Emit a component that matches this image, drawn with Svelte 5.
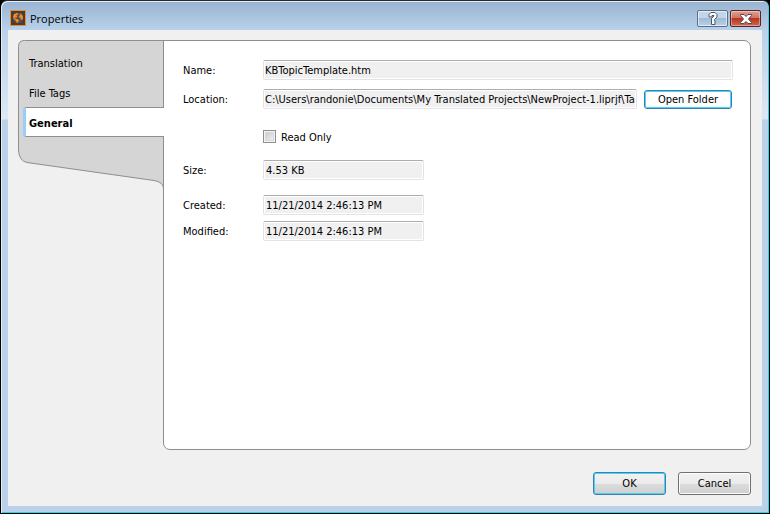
<script>
  const tabs = ['Translation', 'File Tags', 'General'];
  let active = $state('General');
  let readOnly = $state(false);
</script>

<div class="window">
  <header>
    <svg class="logo" width="16" height="16" viewBox="0 0 16 16" aria-hidden="true">
      <rect x=".5" y=".5" width="15" height="15" fill="#3f403f" stroke="#f28a2c" />
      <circle cx="8" cy="8" r="5.2" fill="#5b5045" />
      <path d="M3 6.500 4 4.200 6.500 3 8.200 3.400 7.800 4.800 6.200 5.600 7.400 6.800 6 7.800 4.400 7.400 5.600 8.800 8 9.200 8.800 10.600 7.800 12.800 6.600 12.600 5.600 10.400 3.600 8.400zM9.400 3.200 11.600 4.200 12.800 6 13 8.400 12 10 10.800 9.600 10.600 8 9 7.200 9.400 5.800 10.400 5z" fill="#f28a2c" />
    </svg>
    <h1>Properties</h1>
    <button class="cap help" type="button" aria-label="Help">
      <svg width="12" height="13" viewBox="0 0 12 13" aria-hidden="true">
        <path d="M2 5V2.500L4 .5H8L10 2.500V5L7.500 7.500V8.500H8V12.500H4.500V6.500L7 4V3.500H5V5z" fill="#fff" stroke="#4d5665" />
      </svg>
    </button>
    <button class="cap close" type="button" aria-label="Close">
      <svg width="12" height="10" viewBox="0 0 12 10" aria-hidden="true">
        <path d="M.5.5H4L6 2.500 8 .5H11.500V1.500L8.500 5 11.500 8.500V9.500H8L6 7.500 4 9.500H.5V8.500L3.500 5 .5 1.500z" fill="#fff" stroke="#5b4350" />
      </svg>
    </button>
  </header>

  <main>
    <div class="body">
      <nav>
        <svg class="shape" width="146" height="148" viewBox="0 0 146 148" aria-hidden="true">
          <path d="M146 .5H6.500Q.5.500.5 6.500V110Q1 121 9 122.500L136 140.500Q145 142 145.500 148V.5z" fill="#d5d5d5" stroke="#8e8e8e" />
        </svg>
        {#each tabs as tab}
          <button type="button" class="tab" class:active={tab === active} onclick={() => (active = tab)}>{tab}</button>
        {/each}
      </nav>

      <section>
        <label for="name">Name:</label>
        <input id="name" type="text" readonly value="KBTopicTemplate.htm" />

        <label for="location">Location:</label>
        <div class="pair">
          <input id="location" type="text" readonly value="C:\Users\randonie\Documents\My Translated Projects\NewProject-1.liprjf\Ta" />
          <button class="push focus open" type="button">Open Folder</button>
        </div>

        <label class="check">
          <input type="checkbox" bind:checked={readOnly} />
          <span>Read Only</span>
        </label>

        <label for="size">Size:</label>
        <input id="size" class="short" type="text" readonly value="4.53 KB" />

        <label class="spaced" for="created">Created:</label>
        <input id="created" class="short spaced" type="text" readonly value="11/21/2014 2:46:13 PM" />

        <label class="near" for="modified">Modified:</label>
        <input id="modified" class="short near" type="text" readonly value="11/21/2014 2:46:13 PM" />
      </section>
    </div>

    <footer>
      <button class="push focus" type="button">OK</button>
      <button class="push" type="button">Cancel</button>
    </footer>
  </main>
</div>

<style>
  :global(body) {
    margin: 0;
    background: #000;
  }

  .window,
  .window * {
    box-sizing: border-box;
  }

  .window {
    display: flex;
    flex-direction: column;
    min-height: 100vh;
    padding: 0 6px 7px;
    border: 1px solid #000;
    border-top-color: #2b2b2b;
    border-radius: 7px 7px 0 0;
    background: linear-gradient(#99b4d1 0, #b9d1ea 29px, #dce8f5 118px, #b9d1ea 119px);
    box-shadow: inset 1px 1px #e4eef8, inset -1px -1px #27d3ee;
    color: #000;
    font: 11px/14px 'DejaVu Sans Condensed', 'DejaVu Sans', sans-serif;
  }

  header {
    display: flex;
    align-items: center;
    height: 29px;
    padding: 6px 2px 0 3px;
  }

  .logo {
    margin-bottom: 2px;
  }

  h1 {
    flex: 1;
    margin: 0 0 0 4px;
    font: 11px/16px 'Open Sans', sans-serif;
  }

  button {
    padding: 0;
    color: inherit;
    font: inherit;
  }

  .cap {
    display: flex;
    align-items: center;
    justify-content: center;
    width: 31px;
    height: 17px;
    margin-left: 2px;
    border: 1px solid #5a6f8c;
    border-radius: 2px;
    box-shadow: inset 0 0 0 1px #ffffff90;
  }

  .help {
    background: linear-gradient(#c3d5e9 50%, #a1bad6 50%, #b9d2ea);
  }

  .close {
    border-color: #55252a;
    background: linear-gradient(#dda093 0, #d1705e 50%, #b9331d 50%, #cf6b50);
    box-shadow: inset 0 0 0 1px #ffffff60;
  }

  main {
    display: flex;
    flex: 1;
    flex-direction: column;
    margin: 0 1px;
    padding: 10px 11px 11px 10px;
    background: #f0f0f0;
  }

  .body {
    display: flex;
    flex: 1;
  }

  nav {
    position: relative;
    z-index: 1;
    display: flex;
    flex-direction: column;
    align-self: flex-start;
    width: 146px;
    height: 148px;
    margin-right: -1px;
    padding: 7px 0 0 5px;
  }

  .shape {
    position: absolute;
    top: 0;
    left: 0;
  }

  .tab {
    position: relative;
    height: 30px;
    padding: 3px 0 0 5px;
    border: 1px solid transparent;
    border-right: 0;
    background: none;
    text-align: left;
  }

  .active {
    padding-left: 3px;
    border-color: #8e8e8e;
    border-left: 3px solid #99ccff;
    border-radius: 3px 0 0 3px;
    background: #fff;
    font-weight: bold;
  }

  section {
    display: grid;
    flex: 1;
    grid-template-columns: 80px 1fr;
    align-content: start;
    align-items: center;
    row-gap: 9px;
    padding: 19px 17px 19px 19px;
    border: 1px solid #8e8e8e;
    border-radius: 0 7px 7px 7px;
    background: #fff;
  }

  label {
    padding-top: 2px;
  }

  input[type='text'] {
    width: 100%;
    min-width: 0;
    height: 20px;
    padding: 0 1px;
    border: 1px solid #e2e3ea;
    border-top-color: #abadb3;
    border-radius: 2px;
    outline: 0;
    background: #f0f0f0;
    box-shadow: inset 0 0 0 1px #fff;
    color: inherit;
    font: inherit;
  }

  input.short {
    width: 161px;
    padding-left: 2px;
  }

  .pair {
    display: flex;
    align-items: center;
    gap: 7px;
    padding-right: 1px;
  }

  .check {
    display: flex;
    grid-column: 2;
    align-items: center;
    gap: 5px;
    height: 20px;
    margin: 8px 0 5px;
    padding: 0;
  }

  .check span {
    padding-top: 3px;
  }

  input[type='checkbox'] {
    appearance: none;
    width: 13px;
    height: 13px;
    margin: 0;
    border: 1px solid #8e8f8f;
    background: linear-gradient(135deg, #c3c6cc, #f6f6f6);
    box-shadow: inset 0 0 0 1px #f4f4f4, inset 0 0 0 2px #d6d8dc;
  }

  .spaced {
    margin-top: 6px;
  }

  .near {
    margin-top: -3px;
  }

  .push {
    width: 73px;
    height: 23px;
    border: 1px solid #707070;
    border-radius: 3px;
    background: linear-gradient(#f2f2f2, #ebebeb 50%, #dddddd 50%, #cfcfcf);
    box-shadow: inset 0 0 0 1px #fcfcfc;
  }

  .focus {
    border-color: #3c7fb1;
    box-shadow: inset 0 0 0 1px #48d2f5;
  }

  .open {
    flex: none;
    width: 88px;
    height: 19px;
    padding-top: 1px;
    background: #fff;
  }

  footer {
    display: flex;
    justify-content: flex-end;
    gap: 12px;
    margin-top: 22px;
  }
</style>
